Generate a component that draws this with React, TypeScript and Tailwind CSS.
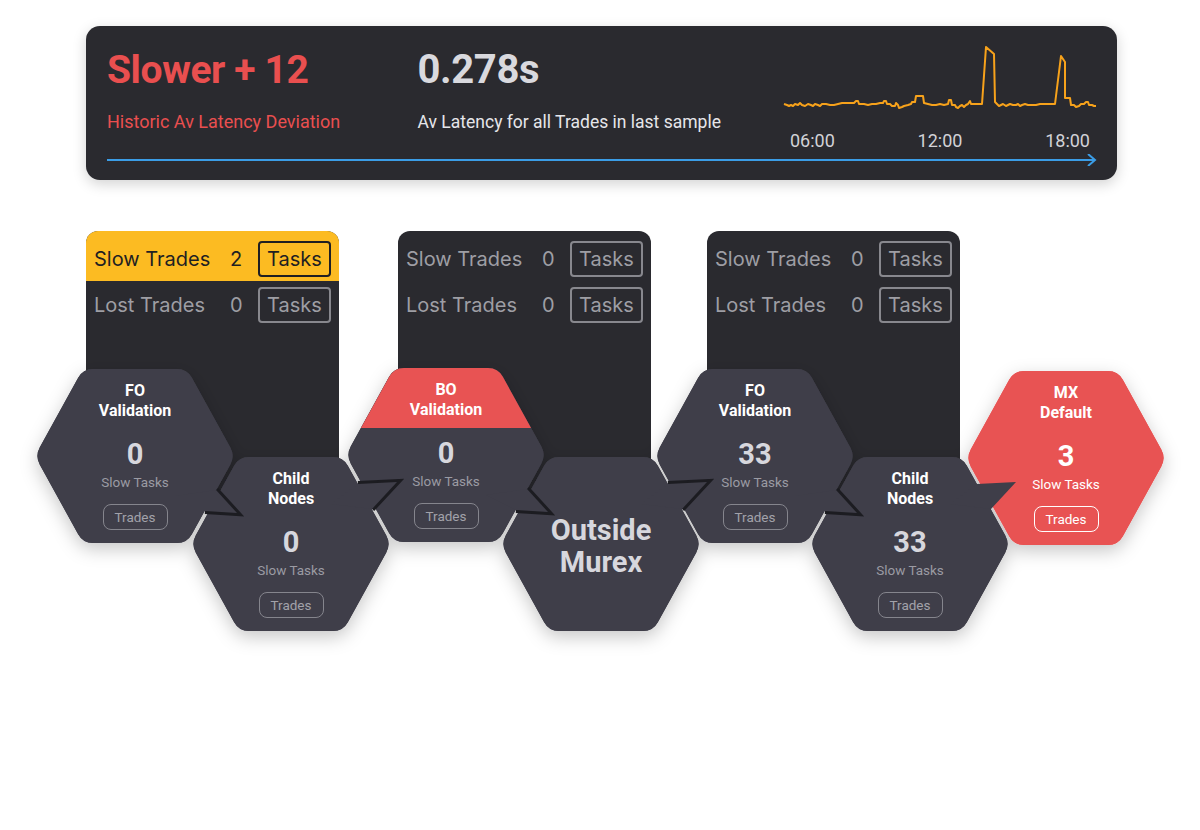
import React from 'react';

type Tone = 'dark' | 'bo' | 'red';

type HexNode = {
  cx: number;
  cy: number;
  tone: Tone;
  title?: [string, string];
  count?: string;
  big?: [string, string];
  tail?: 'lr' | 'ur';
  outline?: boolean;
};

const HEX_DARK = '#3f3e49';
const HEX_RED = '#e85353';

const nodes: HexNode[] = [
  { cx: 135, cy: 456, tone: 'dark', title: ['FO', 'Validation'], count: '0', tail: 'lr', outline: true },
  { cx: 291, cy: 544, tone: 'dark', title: ['Child', 'Nodes'], count: '0', tail: 'ur', outline: true },
  { cx: 446, cy: 455, tone: 'bo', title: ['BO', 'Validation'], count: '0', tail: 'lr', outline: true },
  { cx: 601, cy: 544, tone: 'dark', big: ['Outside', 'Murex'], tail: 'ur', outline: true },
  { cx: 755, cy: 456, tone: 'dark', title: ['FO', 'Validation'], count: '33', tail: 'lr', outline: true },
  { cx: 910, cy: 544, tone: 'dark', title: ['Child', 'Nodes'], count: '33', tail: 'ur', outline: false },
  { cx: 1066, cy: 458, tone: 'red', title: ['MX', 'Default'], count: '3' },
];

const cards = [
  { slow: 2, lost: 0, hot: true, ml: '' },
  { slow: 0, lost: 0, hot: false, ml: 'ml-[59px]' },
  { slow: 0, lost: 0, hot: false, ml: 'ml-[56px]' },
];

const chartPoints =
  '0,60 3,61 5,62 7,61 9,62 11,60 14,61 16,59 18,61 21,62 24,60 27,61 29,62 31,60 34,61 36,62 38,60 42,60 46,61 50,61 54,60 58,59 62,59 66,59 70,59 72,57 74,57 75,60 80,60 84,61 88,60 92,60 96,59 99,59 100,57 102,57 103,60 106,60 108,62 111,62 112,59 114,61 115,64 118,63 120,62 124,61 127,60 128,58 131,58 132,52 139,52 140,59 144,60 148,61 152,61 156,60 160,61 164,60 165,56 167,56 168,61 171,61 172,63 174,64 176,62 178,61 180,63 182,61 184,60 186,57 187,60 190,60 194,60 198,60 202,3 210,10 211,58 213,60 215,62 217,61 219,60 222,62 224,61 226,60 229,61 232,61 234,60 236,62 238,61 241,60 244,61 248,61 252,61 256,60 260,60 264,60 268,60 271,60 277,12 281,18 281,54 286,54 287,61 290,61 292,63 295,62 297,60 300,60 302,58 304,58 305,61 308,61 310,62 312,62';

type Pt = [number, number];

function hexPts(cx: number, cy: number): Pt[] {
  return [
    [cx - 100, cy],
    [cx - 52, cy - 87],
    [cx + 52, cy - 87],
    [cx + 100, cy],
    [cx + 52, cy + 87],
    [cx - 52, cy + 87],
  ];
}

function toward(p: Pt, q: Pt, r: number): string {
  const dx = q[0] - p[0];
  const dy = q[1] - p[1];
  const len = Math.hypot(dx, dy);
  return `${(p[0] + (dx * r) / len).toFixed(2)},${(p[1] + (dy * r) / len).toFixed(2)}`;
}

function roundedPath(pts: Pt[], r = 10): string {
  const n = pts.length;
  let d = '';
  pts.forEach((p, i) => {
    const prev = pts[(i - 1 + n) % n];
    const next = pts[(i + 1) % n];
    d += `${i === 0 ? 'M' : 'L'}${toward(p, prev, r)} Q${p[0]},${p[1]} ${toward(p, next, r)} `;
  });
  return d + 'Z';
}

function tailPts(node: HexNode) {
  const { cx, cy } = node;
  const rel: Pt[] =
    node.tail === 'lr'
      ? [[81, 34], [102, 57], [70, 55], [40, 40]]
      : [[67, -60], [106, -62], [81, -35], [40, -40]];
  return rel.map(([x, y]) => [cx + x, cy + y] as Pt);
}

const fillOf = (t: Tone) => (t === 'red' ? HEX_RED : HEX_DARK);

function HexLayer() {
  return (
    <svg className="absolute left-0 top-0 pointer-events-none" width={1200} height={830}>
      <defs>
        <filter id="hexShadow" x="-30%" y="-30%" width="160%" height="160%">
          <feDropShadow dx="0" dy="6" stdDeviation="9" floodColor="#000" floodOpacity="0.22" />
        </filter>
        {nodes.map((n, i) => (
          <clipPath id={`hexClip${i}`} key={i}>
            <path d={roundedPath(hexPts(n.cx, n.cy))} />
          </clipPath>
        ))}
      </defs>
      <g filter="url(#hexShadow)">
        {nodes.map((n, i) => (
          <path key={i} d={roundedPath(hexPts(n.cx, n.cy))} fill={fillOf(n.tone)} />
        ))}
      </g>
      {[...nodes.keys()].reverse().map((i) => {
        const n = nodes[i];
        const t = n.tail ? tailPts(n) : null;
        return (
          <g key={i}>
            <path d={roundedPath(hexPts(n.cx, n.cy))} fill={fillOf(n.tone)} />
            {n.tone === 'bo' && (
              <rect x={n.cx - 110} y={n.cy - 95} width={220} height={68} fill={HEX_RED} clipPath={`url(#hexClip${i})`} />
            )}
            {t && (
              <>
                {n.outline && (
                  <polyline
                    points={`${t[0][0]},${t[0][1]} ${t[1][0]},${t[1][1]} ${t[2][0]},${t[2][1]}`}
                    fill="none"
                    stroke="#1c1c21"
                    strokeWidth={6}
                    strokeLinejoin="miter"
                  />
                )}
                <polygon points={t.map((p) => p.join(',')).join(' ')} fill={fillOf(n.tone)} />
              </>
            )}
          </g>
        );
      })}
    </svg>
  );
}

function HexText({ node }: { node: HexNode }) {
  const red = node.tone === 'red';
  return (
    <div
      className="absolute w-[200px] h-[174px] flex flex-col items-center font-['Roboto',sans-serif]"
      style={{ left: node.cx - 100, top: node.cy - 87 }}
    >
      {node.big ? (
        <div className="flex-1 flex flex-col items-center justify-center text-[29px] leading-[32px] font-bold text-[#d7d7dd] pt-[4px]">
          <span>{node.big[0]}</span>
          <span>{node.big[1]}</span>
        </div>
      ) : (
        <>
          <div className="pt-[12px] flex flex-col items-center text-[16px] leading-[20px] font-bold text-white">
            <span>{node.title?.[0]}</span>
            <span>{node.title?.[1]}</span>
          </div>
          <div className={`mt-[17px] text-[29px] leading-[32px] font-bold ${red ? 'text-white' : 'text-[#d7d7dd]'}`}>
            {node.count}
          </div>
          <div className={`mt-[4px] text-[13.5px] leading-[16px] ${red ? 'text-white' : 'text-[#9b9ba3]'}`}>Slow Tasks</div>
          <div
            className={`mt-[14px] w-[65px] h-[26px] rounded-[8px] border-[1.5px] flex items-center justify-center text-[13.5px] ${
              red ? 'border-white text-white' : 'border-[#85858d] text-[#a2a2aa]'
            }`}
          >
            Trades
          </div>
        </>
      )}
    </div>
  );
}

function TradeRow({ label, value, hot, h }: { label: string; value: number; hot: boolean; h: string }) {
  return (
    <div className={`flex items-center px-[8px] ${h} ${hot ? 'bg-[#fcbb22] text-[#1f1f22]' : 'text-[#9e9ea4]'}`}>
      <span className="w-[136px] text-[20px]">{label}</span>
      <span className="w-[28px] text-[20px]">{value}</span>
      <span
        className={`w-[73px] h-[36px] rounded-[4px] border-2 flex items-center justify-center text-[20px] ${
          hot ? 'border-[#1f1f22]' : 'border-[#88888e]'
        }`}
      >
        Tasks
      </span>
    </div>
  );
}

export default function App() {
  return (
    <div className="relative w-[1200px] h-[830px] bg-white overflow-hidden font-['Roboto',sans-serif]">
      <div className="pt-[26px] pl-[86px]">
        <div className="w-[1031px] h-[154px] rounded-[14px] bg-[#2a2a2f] shadow-[0_4px_14px_rgba(0,0,0,0.18)] pt-[18px] px-[21px]">
          <div className="flex">
            <div className="w-[311px]">
              <div className="text-[39px] leading-[52px] font-bold tracking-[-0.01em] text-[#e94f4f]">Slower + 12</div>
              <div className="mt-[14px] text-[18px] leading-[24px] text-[#e94f4f]">Historic Av Latency Deviation</div>
            </div>
            <div className="w-[367px]">
              <div className="text-[40px] leading-[52px] font-bold tracking-[-0.01em] text-[#d9d9de]">0.278s</div>
              <div className="mt-[14px] text-[17.5px] leading-[24px] text-[#e6e6ea]">Av Latency for all Trades in last sample</div>
            </div>
            <div className="w-[312px] flex flex-col">
              <svg width={312} height={66} className="overflow-visible">
                <polyline points={chartPoints} fill="none" stroke="#f7a21b" strokeWidth={2} strokeLinejoin="round" />
              </svg>
              <div className="mt-[20px] flex justify-between px-[6px] text-[18px] leading-[22px] text-[#d2d2d7]">
                <span>06:00</span>
                <span>12:00</span>
                <span>18:00</span>
              </div>
            </div>
          </div>
          <svg width={990} height={12} className="mt-[2px] block">
            <line x1={0} y1={6} x2={988} y2={6} stroke="#3b9de6" strokeWidth={2} />
            <polyline points="981,0 988,6 981,12" fill="none" stroke="#3b9de6" strokeWidth={2} />
          </svg>
        </div>
      </div>

      <div className="mt-[51px] pl-[86px] flex font-['Inter',sans-serif]">
        {cards.map((c, i) => (
          <div key={i} className={`w-[253px] h-[272px] rounded-t-[12px] bg-[#2a2a2f] overflow-hidden ${c.ml}`}>
            <TradeRow label="Slow Trades" value={c.slow} hot={c.hot} h="h-[50px] pt-[5px]" />
            <TradeRow label="Lost Trades" value={c.lost} hot={false} h="h-[48px]" />
          </div>
        ))}
      </div>

      <HexLayer />
      {nodes.map((n, i) => (
        <HexText key={i} node={n} />
      ))}
    </div>
  );
}
